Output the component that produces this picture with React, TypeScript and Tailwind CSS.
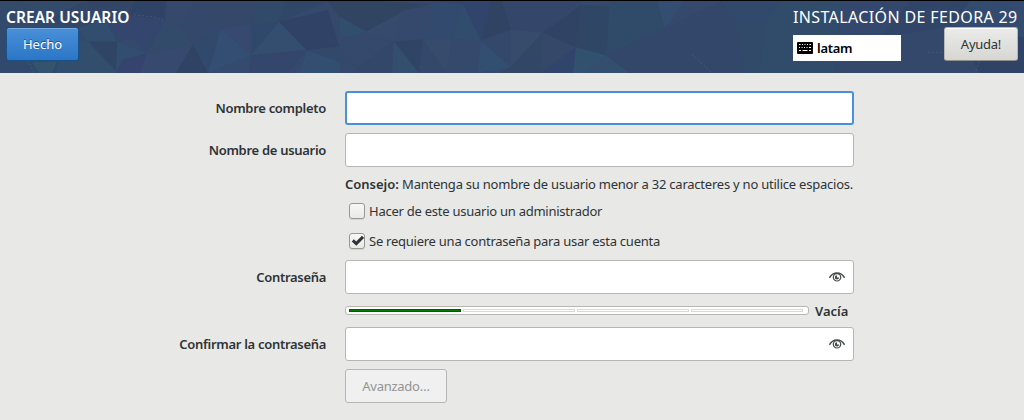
import React from 'react';

const facets: [string, string][] = [
  ['0,0 84,0 50,18 0,38', '#354b6c'],
  ['0,38 50,18 78,30 60,73 0,73', '#304a6d'],
  ['84,0 135,0 128,14 78,30 50,18', '#344668'],
  ['135,0 166,0 165,20 128,14', '#2f4266'],
  ['166,0 195,0 182,26 165,20', '#344a6b'],
  ['78,28 105,18 117,41 87,41', '#31506f'],
  ['105,18 128,14 134,38 117,41', '#34456f'],
  ['128,14 165,20 147,53 134,38', '#35466f'],
  ['165,20 182,26 193,44 147,53', '#324c6b'],
  ['78,41 88,41 83,73 56,73 60,55', '#32506f'],
  ['32,62 57,61 52,73 39,73', '#35566f'],
  ['88,41 118,73 83,73', '#334f6d'],
  ['88,41 117,41 121,60 118,73', '#304566'],
  ['117,41 147,53 116,73', '#314e70'],
  ['147,53 193,44 176,73 116,73', '#384970'],
  ['122,60 147,53 140,73 116,73', '#34446f'],
  ['193,44 208,73 176,73', '#304363'],
  ['182,26 195,0 221,27 193,44', '#33486b'],
  ['195,0 257,0 251,24 221,27', '#34496a'],
  ['221,27 193,44 208,73', '#31496b'],
  ['221,27 251,55 208,73', '#354e75'],
  ['221,27 251,24 251,55', '#384970'],
  ['257,0 285,0 279,21 251,24', '#314b69'],
  ['285,0 328,0 279,21', '#304768'],
  ['279,21 251,55 251,24', '#30486a'],
  ['279,21 307,50 251,55', '#33506f'],
  ['279,21 328,9 339,46 307,50', '#304164'],
  ['328,0 377,0 366,31 339,16', '#314562'],
  ['251,55 307,50 286,73 249,73', '#34466b'],
  ['251,55 249,73 208,73', '#344b70'],
  ['307,50 340,60 340,73 299,73', '#325072'],
  ['307,50 339,46 357,67 340,62', '#32496c'],
  ['340,16 366,31 340,40', '#32506e'],
  ['366,31 404,10 394,41', '#374b6c'],
  ['377,0 433,3 404,10 366,31', '#304561'],
  ['404,10 433,3 423,39 394,41', '#354a6b'],
  ['433,3 463,3 452,39 423,39', '#324b6e'],
  ['463,3 481,40 452,39', '#314d6e'],
  ['433,0 502,0 481,40 463,3', '#31446b'],
  ['502,0 511,29 481,40 492,0', '#314361'],
  ['502,0 580,0 543,32 511,29', '#34466a'],
  ['580,0 581,4 543,32', '#33496a'],
  ['340,35 394,41 357,67', '#344a6d'],
  ['394,41 392,73 355,73 357,67', '#33476b'],
  ['394,41 419,73 392,73', '#33506f'],
  ['394,41 423,39 419,73', '#304565'],
  ['423,39 447,73 419,73', '#33486a'],
  ['423,39 452,39 447,73', '#384d6d'],
  ['452,39 481,40 477,73 447,73', '#34496d'],
  ['481,40 511,67 477,73', '#324f71'],
  ['481,40 511,29 511,67', '#34486b'],
  ['511,29 543,32 511,67', '#384c6b'],
  ['543,32 540,73 500,73 511,67', '#324665'],
  ['543,32 576,47 540,73', '#36486a'],
  ['543,32 581,4 576,47', '#304263'],
  ['581,4 610,5 606,55 576,47', '#304665'],
  ['576,47 573,73 540,73', '#31446b'],
  ['576,47 606,55 585,73 573,73', '#32536f'],
  ['606,55 629,73 585,73', '#355071'],
  ['610,0 657,0 665,28 606,55', '#304b69'],
  ['606,55 665,28 663,73 629,73', '#33476b'],
  ['657,0 684,0 665,28', '#344f73'],
  ['665,28 721,0 734,20 746,73 663,73', '#33476c'],
  ['721,0 782,0 764,24 734,20', '#31496b'],
  ['734,20 764,24 760,73 746,73', '#314b6a'],
  ['764,24 782,0 842,0 835,73 760,73', '#314d6b'],
  ['842,0 910,0 880,38 835,73', '#34476d'],
  ['910,0 970,0 951,25 880,38', '#304567'],
  ['880,38 951,25 980,73 835,73', '#34486b'],
  ['970,0 1024,0 1024,37 951,25', '#344c71'],
  ['951,25 1024,37 1024,73 980,73', '#304164'],
];

function Facets() {
  return (
    <svg className="absolute inset-0 h-full w-full" viewBox="0 0 1024 73" preserveAspectRatio="none" aria-hidden="true">
      <rect width="1024" height="73" fill="#34496b" />
      <g opacity=".85">
        {facets.map(([points, fill]) => (
          <polygon key={points} points={points} fill={fill} />
        ))}
      </g>
      <path d="M134 14 153 16 165 20M28 60 34 73M692 54 712 73M928 52h17M979 61l-4 12" fill="none" stroke="#526987" strokeWidth=".5" strokeDasharray="2 2" />
    </svg>
  );
}

function KeyboardIcon() {
  return (
    <svg className="h-3 w-4 shrink-0" viewBox="0 0 16 12" aria-hidden="true">
      <rect width="16" height="12" rx="1" fill="#000" />
      <path
        d="M2 2.500h1.500M5 2.500h1M7.500 2.500h1M10 2.500h1M12.500 2.500h1.500M2 5.500h1M4.500 5.500h1M7 5.500h1M9.500 5.500h1M12 5.500h2M2 8.500h2M5.500 8.500h5M12 8.500h2"
        stroke="#fff"
        strokeWidth="1.200"
      />
    </svg>
  );
}

function EyeIcon() {
  return (
    <svg className="h-4 w-4" viewBox="0 0 16 16" fill="none" stroke="#464b4c" aria-hidden="true">
      <path d="M.4 8.800C2.300 5.500 4.800 4 8 4s5.700 1.500 7.600 4.800" strokeWidth="1.500" />
      <circle cx="8" cy="8.300" r="3.700" strokeWidth="1.200" />
      <path d="M8 6.200A2.200 2.200 0 1 0 10.200 8.600H8Z" fill="#464b4c" stroke="none" />
    </svg>
  );
}

function Entry({ focused = false, secret = false }: { focused?: boolean; secret?: boolean }) {
  return (
    <div
      className={
        focused
          ? 'h-[34px] w-[509px] rounded-[3px] border-2 border-[#4a90d9] bg-white'
          : 'flex h-[34px] w-[509px] items-center justify-end rounded-[3px] border border-[#b6b6b3] bg-white pr-2'
      }
    >
      {secret && <EyeIcon />}
    </div>
  );
}

function Row({ label, children }: { label?: React.ReactNode; children: React.ReactNode }) {
  return (
    <div className="flex items-center">
      <div className="mr-[19px] w-[326px] shrink-0 text-right font-semibold tracking-[-0.3px]">{label}</div>
      {children}
    </div>
  );
}

function Check({ checked = false, children }: { checked?: boolean; children: React.ReactNode }) {
  return (
    <div className="flex h-5 items-center gap-1 pl-1">
      <span className="flex h-4 w-4 items-center justify-center rounded-[3px] border border-[#989993] bg-linear-to-b from-[#f8f8f8] to-[#e9e9e8] shadow-[0_1px_1px_#0000001a]">
        {checked && (
          <svg className="h-3.5 w-3.5 shrink-0" viewBox="0 0 14 14" aria-hidden="true">
            <path d="M2.800 6.300 6.300 9.600 13 2.800" fill="none" stroke="#2e3436" strokeWidth="3" />
          </svg>
        )}
      </span>
      <span className="tracking-[-0.25px]">{children}</span>
    </div>
  );
}

export default function App() {
  return (
    <div className="h-[420px] w-[1024px] overflow-hidden bg-[#e8e8e6] font-['Noto_Sans',sans-serif] text-[13px] leading-5 whitespace-nowrap text-[#2e3436]">
      <header className="relative flex h-[73px] justify-between border-t border-black">
        <Facets />
        <div className="relative flex flex-col items-start pt-[6px] pl-[6px]">
          <h1 className="h-5 text-[15.5px] font-semibold tracking-[0.05px] text-white">CREAR USUARIO</h1>
          <button className="h-[34px] w-[73px] rounded-[3px] border border-[#1c5187] bg-linear-to-b from-[#4a90d9] to-[#2a76c6] text-white shadow-[inset_0_1px_#76abe2] text-shadow-[0_-1px_#1c5187]">
            Hecho
          </button>
        </div>
        <div className="relative flex w-[231px] flex-col pt-[6px] pr-[6px]">
          <div className="h-5 text-[16px] tracking-[0.37px] text-white">INSTALACIÓN DE FEDORA 29</div>
          <div className="flex items-end justify-between">
            <div className="flex h-[26px] w-[108px] items-center gap-1 bg-white pl-1 text-black">
              <KeyboardIcon />
              <span className="font-semibold tracking-[-0.3px]">latam</span>
            </div>
            <button className="h-[34px] w-[74px] rounded-[3px] border border-[#b6b6b3] border-b-[#91918c] bg-linear-to-b from-[#ebebea] to-[#d6d6d3] tracking-[-0.25px] shadow-[inset_0_1px_white]">
              Ayuda!
            </button>
          </div>
        </div>
      </header>
      <main className="flex flex-col pt-[18px]">
        <div className="flex flex-col gap-2">
          <Row label="Nombre completo"><Entry focused /></Row>
          <Row label="Nombre de usuario"><Entry /></Row>
        </div>
        <Row>
          <p className="h-[34px] leading-[34px] tracking-[-0.23px]">
            <b className="font-semibold tracking-normal">Consejo:</b> Mantenga su nombre de usuario menor a 32 caracteres y no utilice espacios.
          </p>
        </Row>
        <div className="flex flex-col gap-2.5 pb-[9px]">
          <Row><Check>Hacer de este usuario un administrador</Check></Row>
          <Row><Check checked>Se requiere una contraseña para usar esta cuenta</Check></Row>
        </div>
        <Row label="Contraseña"><Entry secret /></Row>
        <Row>
          <div className="flex h-[33px] items-center">
            <div className="flex h-[9px] w-[464px] items-center gap-[2px] rounded-[3px] border border-[#b6b6b3] bg-white pl-[3px]">
              <span className="h-[3px] w-[112px] border border-[#0b500b] bg-[#008000]" />
              <span className="h-[3px] w-[112px] border border-[#d8d8d6] bg-white" />
              <span className="h-[3px] w-[112px] border border-[#d8d8d6] bg-white" />
              <span className="h-[3px] w-[112px] border border-[#d8d8d6] bg-white" />
            </div>
            <span className="ml-1.5 font-semibold">Vacía</span>
          </div>
        </Row>
        <Row label="Confirmar la contraseña"><Entry secret /></Row>
        <div className="pt-2">
          <Row>
            <button disabled className="h-[34px] w-[102px] rounded-[3px] border border-[#b6b6b3] bg-[#f0f0f0] tracking-[-0.25px] text-[#919494]">
              Avanzado…
            </button>
          </Row>
        </div>
      </main>
    </div>
  );
}
